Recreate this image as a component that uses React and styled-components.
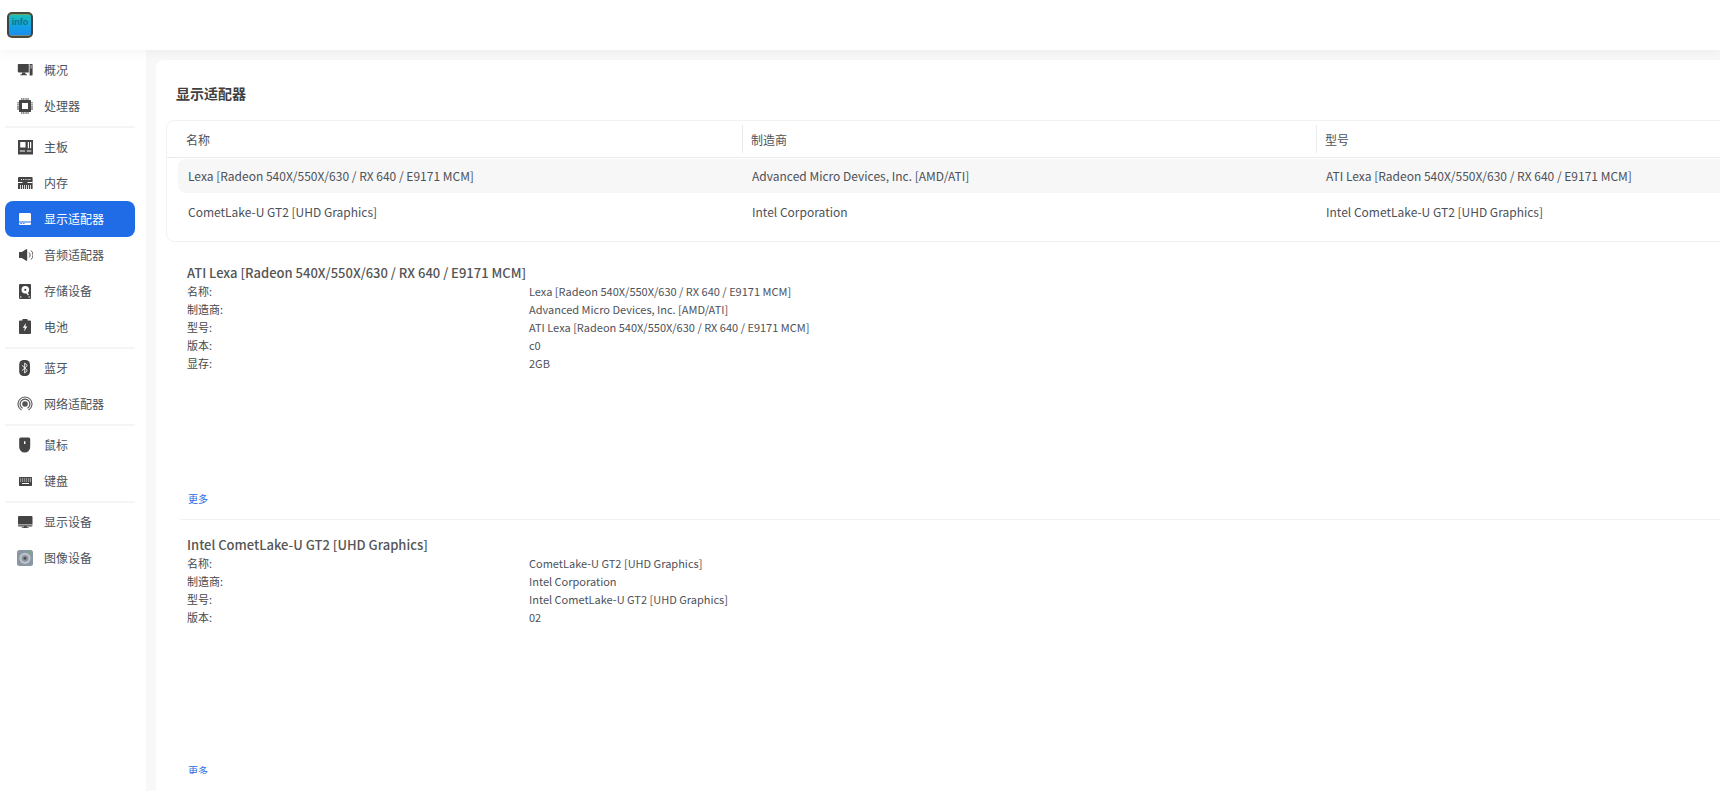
import React from "react";
import styled, { createGlobalStyle } from "styled-components";

const FONT = `"Noto Sans CJK SC", "Noto Sans", sans-serif`;
const TEXT = "#4d5159";

const GlobalStyle = createGlobalStyle`
  html, body {
    margin: 0;
    padding: 0;
    background: #f8f8f8;
    font-family: ${FONT};
    color: ${TEXT};
  }
  * { box-sizing: border-box; }
`;

const Page = styled.div`
  width: 1720px;
  height: 791px;
  overflow: hidden;
  display: flex;
  flex-direction: column;
`;

const Header = styled.header`
  height: 50px;
  flex: none;
  background: #fff;
  display: flex;
  align-items: center;
  padding-left: 7px;
  box-shadow: 0 2px 12px rgba(0, 0, 0, 0.05);
  position: relative;
  z-index: 2;
`;

const Logo = styled.div`
  width: 26px;
  height: 26px;
  border-radius: 5px;
  border: 2px solid #3d4249;
  background: linear-gradient(180deg, #17c2b8, #149fe6 60%, #1b8cf2);
  display: flex;
  justify-content: center;
  padding-top: 3px;
  border-top-color: #4a4a3a;
  border-bottom-color: #4a4a3a;
  box-shadow: inset 0 1px 0 rgba(190, 140, 50, 0.55), inset 0 -1px 0 rgba(190, 140, 50, 0.55);
`;

const LogoText = styled.span`
  font-family: "Liberation Sans", sans-serif;
  font-size: 9px;
  font-weight: 700;
  line-height: 10px;
  color: #10708c;
`;

const Body = styled.div`
  flex: 1;
  display: flex;
  min-height: 0;
`;

const Sidebar = styled.nav`
  width: 146px;
  flex: none;
  background: #fff;
  padding: 2px 11px 0 5px;
`;

const NavGroup = styled.div`
  padding-bottom: 2px;
  margin-bottom: 1px;
  border-bottom: 2px solid #f5f5f5;

  &:last-child {
    border-bottom: none;
  }
`;

const NavItem = styled.div`
  height: 36px;
  display: flex;
  align-items: center;
  gap: 11px;
  padding-left: 12px;
  border-radius: 8px;
  font-size: 12px;
  color: ${(p) => (p.$active ? "#fff" : TEXT)};
  background: ${(p) => (p.$active ? "#1f6ce6" : "transparent")};
`;

const NavLabel = styled.span`
  padding-bottom: 1px;
`;

const IconBox = styled.svg`
  width: 16px;
  height: 16px;
  flex: none;
`;

const Main = styled.main`
  flex: 1;
  min-width: 0;
  margin: 10px 0 0 10px;
  background: #fff;
  border-radius: 8px 0 0 0;
  padding: 0 0 0 10px;
`;

const Content = styled.div`
  height: 714px;
  overflow: hidden;
`;

const Title = styled.h1`
  margin: 0;
  height: 60px;
  padding-left: 10px;
  font-size: 14px;
  font-weight: 700;
  line-height: 66px;
  color: #404040;
`;

const Table = styled.div`
  width: 1740px;
  height: 122px;
  margin-bottom: 6px;
  border: 1px solid #f2f2f2;
  border-radius: 8px;
`;

const THead = styled.div`
  display: grid;
  grid-template-columns: 575px 574px 1fr;
  height: 37px;
  align-items: center;
  border-bottom: 1px solid #ebebeb;
`;

const Th = styled.div`
  height: 28px;
  line-height: 30px;
  font-size: 12px;
  color: ${TEXT};
  padding-left: ${(p) => (p.$divider ? "8px" : "19px")};
  border-left: ${(p) => (p.$divider ? "1px solid #ebebeb" : "none")};
`;

const TBody = styled.div`
  padding: 1px 0 0 11px;
`;

const Tr = styled.div`
  display: grid;
  grid-template-columns: 564px 574px 1fr;
  height: 34px;
  margin-bottom: 2px;
  align-items: center;
  border-radius: 8px 0 0 8px;
  background: ${(p) => (p.$selected ? "#f7f7f7" : "transparent")};
`;

const Td = styled.div`
  font-size: 12px;
  padding: 0 0 1px 10px;
  white-space: nowrap;
`;

const Device = styled.section`
  height: 272px;
  margin-left: 14px;
  padding: 16px 0 12px 7px;
  display: flex;
  flex-direction: column;
  border-bottom: 1px solid #f2f2f2;
`;

const DeviceTitle = styled.h2`
  margin: 0;
  font-size: 13px;
  font-weight: 500;
  line-height: 18px;
  color: #555;
`;

const DetailRow = styled.div`
  display: grid;
  grid-template-columns: 342px 1fr;
  font-size: 11px;
  line-height: 18px;
`;

const DetailLabel = styled.span`
  color: #484848;
`;

const More = styled.a`
  margin: auto 0 0 1px;
  font-size: 10px;
  line-height: 16px;
  color: #1f6ce6;
`;

const Icon = ({ children }) => (
  <IconBox viewBox="0 0 16 16" fill="#444">
    {children}
  </IconBox>
);

const icons = {
  overview: (
    <Icon>
      <path d="M1.6 2h10.2v8.4H1.6a.8.8 0 0 1-.8-.8V2.8a.8.8 0 0 1 .8-.8z" />
      <path d="M5 10.4h3.4v1.8H5zM3.4 12.2H10v1H3.4z" />
      <path d="M12.6 2h2.3a.7.7 0 0 1 .7.7v10a.7.7 0 0 1-.7.7h-2.3z" />
      <path d="M13.4 3.6h1.4v.8h-1.4zM13.4 5.400h1.4v.8h-1.4z" fill="#fff" />
    </Icon>
  ),
  cpu: (
    <Icon>
      <path fillRule="evenodd" d="M2.6 2h10.800a.6.6 0 0 1 .6.6v10.800a.6.6 0 0 1-.6.6H2.600a.6.6 0 0 1-.6-.6V2.600a.6.6 0 0 1 .6-.6zM5 5v6h6V5z" />
      <path d="M4.400 0h.9v2h-.9zM6.400 0h.9v2h-.9zM8.600 0h.9v2h-.9zM10.600 0h.9v2h-.9zM4.400 14h.9v2h-.9zM6.400 14h.9v2h-.9zM8.600 14h.9v2h-.9zM10.600 14h.9v2h-.9zM0 4.400h2v.9H0zM0 6.400h2v.9H0zM0 8.600h2v.9H0zM0 10.600h2v.9H0zM14 4.400h2v.9h-2zM14 6.400h2v.9h-2zM14 8.600h2v.9h-2zM14 10.600h2v.9h-2z" />
    </Icon>
  ),
  board: (
    <Icon>
      <path fillRule="evenodd" d="M1 1h15v14.500H1zM3.200 3v5.500h5.300V3zM10.800 3v6.200H12V3zM13 3v6.200h1.200V3zM2.800 11.400v1.200H8v-1.200zM9.800 11.400v1.200h4.500v-1.200z" />
    </Icon>
  ),
  memory: (
    <Icon>
      <path d="M2 2h12.600a1 1 0 0 1 1 1v11H1V3a1 1 0 0 1 1-1z" />
      <path d="M4 4h1v1H4zM6.200 4h1v1h-1zM8.400 4h1v1h-1zM10.600 4h1v1h-1zM12.400 4h1v1h-1z" fill="#fff" />
      <path d="M1 7h4.500v1H1zM10.500 7h5.100v1h-5.100z" fill="#fff" />
      <path d="M3 10v4h.8v-4zM5 10v4h.8v-4zM7 10v4h.8v-4zM9 10v4h.8v-4zM11 10v4h.8v-4zM13 10v4h.8v-4z" fill="#fff" />
    </Icon>
  ),
  display: (
    <Icon>
      <path d="M3.400 2h9.200A1.400 1.400 0 0 1 14 3.400v7.100H2V3.400A1.400 1.400 0 0 1 3.400 2z" fill="#fff" />
      <path d="M2 11.400h12V13a1 1 0 0 1-1 1H3a1 1 0 0 1-1-1zM3.200 12.300v.7H5v-.7zM5.800 12.300v.7h1.800v-.7z" fill="#fff" fillRule="evenodd" />
    </Icon>
  ),
  audio: (
    <Icon>
      <path d="M2.600 5h2.200l4.400-2.700a.6.6 0 0 1 1 .5v10.400a.6.6 0 0 1-1 .5L4.800 11H2.600a.6.6 0 0 1-.6-.6V5.600a.6.6 0 0 1 .6-.6z" />
      <path d="M12 5.500a3.400 3.400 0 0 1 0 5M14 3.500a6 6 0 0 1 0 9" fill="none" stroke="#444" strokeWidth=".9" />
    </Icon>
  ),
  disk: (
    <Icon>
      <path fillRule="evenodd" d="M3 1h10a1 1 0 0 1 1 1v13a1 1 0 0 1-1 1H3a1 1 0 0 1-1-1V2a1 1 0 0 1 1-1zM8.300 3a3.800 3.800 0 1 0 0 7.600 3.800 3.800 0 0 0 0-7.600zM8.300 5.700a1.100 1.100 0 1 1 0 2.200 1.100 1.100 0 0 1 0-2.200z" />
      <path d="M9 8l3 3.600-1 .8-2.900-3.600z" fill="#fff" />
      <circle cx="3.800" cy="14" r=".7" fill="#fff" />
      <circle cx="12.200" cy="14" r=".7" fill="#fff" />
    </Icon>
  ),
  battery: (
    <Icon>
      <path fillRule="evenodd" d="M5.500 0h5v1.500H13a1 1 0 0 1 1 1V14a1 1 0 0 1-1 1H3a1 1 0 0 1-1-1V2.500a1 1 0 0 1 1-1h2.500zM9 4L5.800 8.800h2l-.7 3.700 3.200-5h-2z" />
    </Icon>
  ),
  bluetooth: (
    <Icon>
      <rect x="2.200" y="0" width="10.800" height="16" rx="4.500" />
      <path d="M4.900 5.200l5.400 5.300L7.700 13V3l2.600 2.500-5.400 5.300" fill="none" stroke="#fff" strokeWidth=".9" />
    </Icon>
  ),
  network: (
    <Icon>
      <g fill="none" stroke="#555" strokeWidth="1.100">
        <path d="M4.500 14.060A7 7 0 1 1 11.500 14.060" />
        <path d="M5.550 12.240A4.900 4.900 0 1 1 10.450 12.240" />
      </g>
      <circle cx="8" cy="8" r="2.800" fill="#555" />
    </Icon>
  ),
  mouse: (
    <Icon>
      <path fillRule="evenodd" d="M3.800.5h7.800a1.600 1.600 0 0 1 1.600 1.600V10a5.500 5.500 0 0 1-11 0V2.100A1.600 1.600 0 0 1 3.800.5zM7 4.200V7h1.400V4.200z" />
    </Icon>
  ),
  keyboard: (
    <Icon>
      <path fillRule="evenodd" d="M2.400 4h12.200a.4.4 0 0 1 .4.4v8.200a.4.4 0 0 1-.4.4H2.400a.4.4 0 0 1-.4-.4V4.400a.4.4 0 0 1 .4-.4zM3.200 5.400v1h1v-1zM5.200 5.400v1h1v-1zM7.200 5.400v1h1v-1zM9.200 5.400v1h1v-1zM11.200 5.400v1h1v-1zM13 5.400v1h1v-1zM3.200 7.600v1h1v-1zM5.200 7.600v1h1v-1zM7.200 7.600v1h1v-1zM9.200 7.600v1h1v-1zM11.200 7.600v1h1v-1zM13 7.600v1h1v-1zM5 9.900V11h7V9.900z" />
    </Icon>
  ),
  monitor: (
    <Icon>
      <path d="M2 2h12.500a1 1 0 0 1 1 1v7.600H1V3a1 1 0 0 1 1-1z" />
      <path d="M1 11.300h14.500v.2a.9.9 0 0 1-.9.9H1.900a.9.9 0 0 1-.9-.9zM6.800 12.400h2.900v1H6.800zM4.800 13.200h6.900v.8H4.800z" />
    </Icon>
  ),
  camera: (
    <IconBox viewBox="0 0 16 16">
      <rect x="0" y="0" width="16" height="16" rx="2.500" fill="#8b97a3" />
      <circle cx="8" cy="8.300" r="5.600" fill="#bcc3ca" />
      <circle cx="8" cy="8.300" r="3.400" fill="#8e959c" />
      <circle cx="8" cy="8.300" r="1.500" fill="#4d5257" />
      <circle cx="13.800" cy="2" r=".8" fill="#4ccd4c" />
    </IconBox>
  ),
};

const navGroups = [
  [
    { key: "overview", label: "概况" },
    { key: "cpu", label: "处理器" },
  ],
  [
    { key: "board", label: "主板" },
    { key: "memory", label: "内存" },
    { key: "display", label: "显示适配器", active: true },
    { key: "audio", label: "音频适配器" },
    { key: "disk", label: "存储设备" },
    { key: "battery", label: "电池" },
  ],
  [
    { key: "bluetooth", label: "蓝牙" },
    { key: "network", label: "网络适配器" },
  ],
  [
    { key: "mouse", label: "鼠标" },
    { key: "keyboard", label: "键盘" },
  ],
  [
    { key: "monitor", label: "显示设备" },
    { key: "camera", label: "图像设备" },
  ],
];

const tableRows = [
  {
    name: "Lexa [Radeon 540X/550X/630 / RX 640 / E9171 MCM]",
    vendor: "Advanced Micro Devices, Inc. [AMD/ATI]",
    model: "ATI Lexa [Radeon 540X/550X/630 / RX 640 / E9171 MCM]",
  },
  {
    name: "CometLake-U GT2 [UHD Graphics]",
    vendor: "Intel Corporation",
    model: "Intel CometLake-U GT2 [UHD Graphics]",
  },
];

const devices = [
  {
    title: "ATI Lexa [Radeon 540X/550X/630 / RX 640 / E9171 MCM]",
    rows: [
      ["名称:", "Lexa [Radeon 540X/550X/630 / RX 640 / E9171 MCM]"],
      ["制造商:", "Advanced Micro Devices, Inc. [AMD/ATI]"],
      ["型号:", "ATI Lexa [Radeon 540X/550X/630 / RX 640 / E9171 MCM]"],
      ["版本:", "c0"],
      ["显存:", "2GB"],
    ],
  },
  {
    title: "Intel CometLake-U GT2 [UHD Graphics]",
    rows: [
      ["名称:", "CometLake-U GT2 [UHD Graphics]"],
      ["制造商:", "Intel Corporation"],
      ["型号:", "Intel CometLake-U GT2 [UHD Graphics]"],
      ["版本:", "02"],
    ],
  },
];

export default function App() {
  return (
    <Page>
      <GlobalStyle />
      <Header>
        <Logo>
          <LogoText>info</LogoText>
        </Logo>
      </Header>
      <Body>
        <Sidebar>
          {navGroups.map((group, i) => (
            <NavGroup key={i}>
              {group.map((item) => (
                <NavItem key={item.key} $active={item.active}>
                  {icons[item.key]}
                  <NavLabel>{item.label}</NavLabel>
                </NavItem>
              ))}
            </NavGroup>
          ))}
        </Sidebar>
        <Main>
          <Content>
            <Title>显示适配器</Title>
            <Table>
              <THead>
                <Th>名称</Th>
                <Th $divider>制造商</Th>
                <Th $divider>型号</Th>
              </THead>
              <TBody>
                {tableRows.map((row, i) => (
                  <Tr key={row.name} $selected={i === 0}>
                    <Td>{row.name}</Td>
                    <Td>{row.vendor}</Td>
                    <Td>{row.model}</Td>
                  </Tr>
                ))}
              </TBody>
            </Table>
            {devices.map((device) => (
              <Device key={device.title}>
                <DeviceTitle>{device.title}</DeviceTitle>
                {device.rows.map(([label, value]) => (
                  <DetailRow key={label}>
                    <DetailLabel>{label}</DetailLabel>
                    <span>{value}</span>
                  </DetailRow>
                ))}
                <More>更多</More>
              </Device>
            ))}
          </Content>
        </Main>
      </Body>
    </Page>
  );
}
